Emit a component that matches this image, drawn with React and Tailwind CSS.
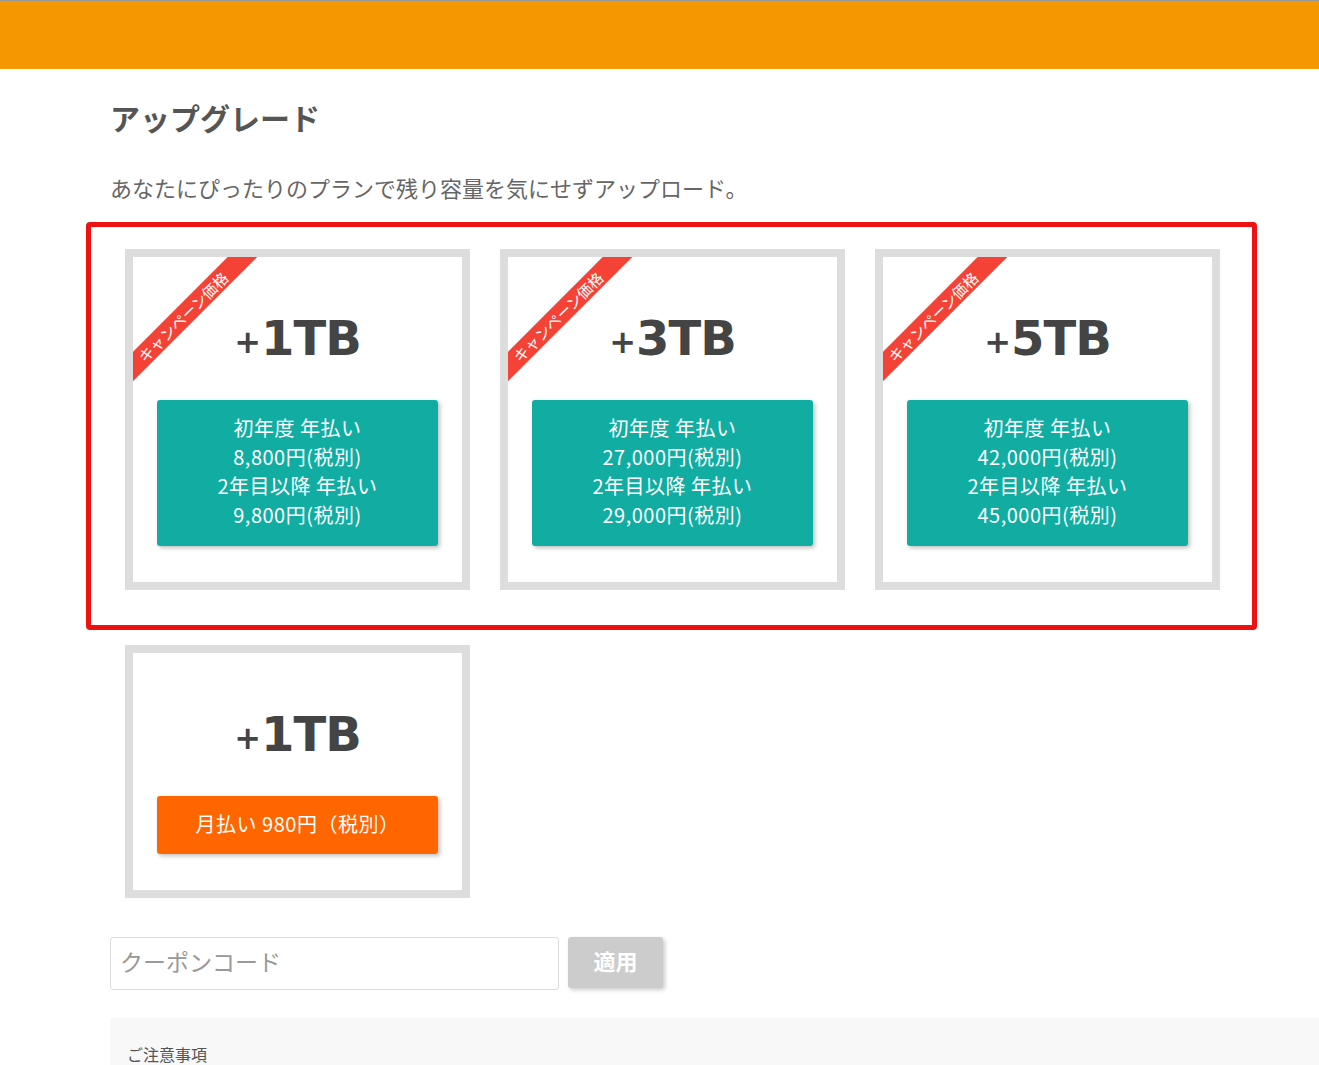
import React from 'react';

const jp = { fontFamily: '"Noto Sans CJK JP", "Noto Sans", sans-serif' };

const plans = [
  { size: '1TB', first: '8,800円(税別)', later: '9,800円(税別)' },
  { size: '3TB', first: '27,000円(税別)', later: '29,000円(税別)' },
  { size: '5TB', first: '42,000円(税別)', later: '45,000円(税別)' },
];

function Title({ size }) {
  return (
    <div
      className="h-[60px] flex items-center justify-center font-bold text-[#444]"
      style={{ fontFamily: '"DejaVu Sans", "Noto Sans CJK JP", sans-serif' }}
    >
      <span className="text-[32px] mt-[8px]">+</span>
      <span className="text-[48px] tracking-[-1px]">{size}</span>
    </div>
  );
}

function Card({ children, ribbon }) {
  return (
    <div className="w-[345px] border-[8px] border-[#dddddd] bg-white">
      <div className="relative overflow-hidden px-[24px] pt-[51px] pb-[36px]">
        {ribbon && (
          <div className="absolute left-[-36px] top-[45px] w-[180px] h-[21px] bg-[#f44336] -rotate-45 flex items-center justify-center">
            <span className="text-white text-[15px] leading-none mr-[12px]">キャンペーン価格</span>
          </div>
        )}
        {children}
      </div>
    </div>
  );
}

export default function App() {
  return (
    <div className="h-[1065px] bg-white overflow-hidden" style={jp}>
      <div className="h-[69px] bg-[#f39800] border-t border-[#999]" />

      <div className="pl-[110px]">
        <h1 className="mt-[26px] text-[30px] font-bold text-[#555] leading-[44px]">アップグレード</h1>
        <p className="mt-[32px] text-[22px] text-[#666] leading-[32px]">
          あなたにぴったりのプランで残り容量を気にせずアップロード。
        </p>

        <div className="mt-[19px] ml-[-24px] w-[1171px] border-[5px] border-[#ee1111] rounded-[4px] pl-[34px] pt-[22px] pb-[35px]">
          <div className="flex gap-[30px]">
            {plans.map((p) => (
              <Card key={p.size} ribbon>
                <Title size={p.size} />
                <div className="mt-[32px] h-[146px] pb-[4px] rounded-[3px] bg-[#11ada2] shadow-[2px_2px_4px_rgba(0,0,0,0.25)] flex flex-col items-center justify-center text-white text-[20px] tracking-[0.5px] leading-[29px]">
                  <div>初年度 年払い</div>
                  <div>{p.first}</div>
                  <div>2年目以降 年払い</div>
                  <div>{p.later}</div>
                </div>
              </Card>
            ))}
          </div>
        </div>

        <div className="mt-[15px] ml-[15px]">
          <Card>
            <Title size="1TB" />
            <div className="mt-[32px] h-[58px] pb-[3px] rounded-[3px] bg-[#ff6600] shadow-[2px_2px_4px_rgba(0,0,0,0.25)] flex items-center justify-center text-white text-[20px] tracking-[0.5px]">
              月払い 980円（税別）
            </div>
          </Card>
        </div>

        <div className="mt-[39px] flex items-start gap-[9px]">
          <input
            className="w-[449px] h-[53px] border border-[#dddddd] rounded-[3px] px-[9px] pb-[6px] text-[23px] placeholder-[#999] outline-none"
            placeholder="クーポンコード"
            style={jp}
          />
          <button className="w-[95px] h-[51px] pb-[4px] rounded-[3px] bg-[#cccccc] text-white text-[22px] font-bold shadow-[2px_2px_4px_rgba(0,0,0,0.2)]">
            適用
          </button>
        </div>

        <div className="mt-[28px] bg-[#f8f8f8] h-[120px] pl-[17px] pt-[24px]">
          <div className="text-[16px] text-[#555]">ご注意事項</div>
        </div>
      </div>
    </div>
  );
}
